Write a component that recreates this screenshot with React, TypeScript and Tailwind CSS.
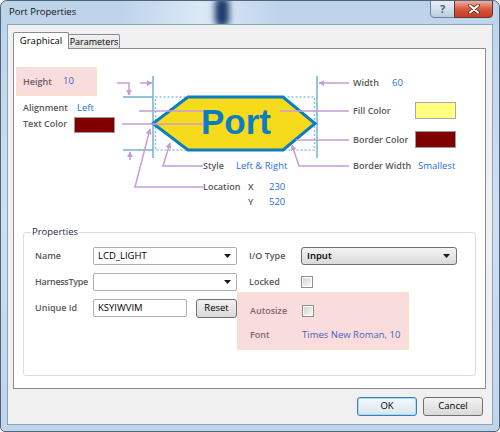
import React from 'react';

// ─── Small Win7-style controls ──────────────────────────────────────────────

function DropArrow() {
  return (
    <svg width="7" height="4" viewBox="0 0 7 4" className="shrink-0">
      <path d="M0 0h7L3.5 4z" fill="#1a1a1a" />
    </svg>
  );
}

function CheckBox() {
  return (
    <div className="w-[12px] h-[12px] border border-[#8f8f8f] bg-white p-[1px]">
      <div className="w-full h-full bg-gradient-to-br from-[#d6d6d6] to-[#f7f7f7]" />
    </div>
  );
}

const LABEL = 'text-[9px] font-semibold text-[#575757]';
const VALUE = 'text-[#1f6fd6]';

// ─── Diagram (free canvas: labels sit where the drawing needs them) ─────────

function PortDiagram() {
  return (
    <div className="relative h-[176px] shrink-0">
      <svg
        className="absolute inset-0"
        width="471"
        height="176"
        viewBox="14 49 471 176"
      >
        <defs>
          <marker
            id="ah"
            viewBox="0 0 8 8"
            refX="7"
            refY="4"
            markerWidth="6"
            markerHeight="6"
            orient="auto"
            markerUnits="userSpaceOnUse"
          >
            <path d="M0,0 L8,4 L0,8 z" fill="#c79bdb" />
          </marker>
        </defs>

        {/* guides */}
        <path
          d="M153 76 V158 M317 76 V158 M123 97 H153 M123 150 H153"
          stroke="#72b0d2"
          strokeWidth="1.5"
          fill="none"
        />
        <rect
          x="155.5"
          y="97"
          width="159"
          height="53"
          fill="none"
          stroke="#8cc3e2"
          strokeWidth="1.5"
          strokeDasharray="2 2"
        />

        {/* port shape */}
        <polygon
          points="188,97 283,97 315,123.5 283,150 188,150 153,123.5"
          fill="#f6da1c"
          stroke="#0b7dc1"
          strokeWidth="3"
        />

        {/* callout lines */}
        <g stroke="#c79bdb" strokeWidth="1.5" fill="none">
          <path d="M117 83 H129 V95" markerEnd="url(#ah)" />
          <path d="M140 83 H152" markerEnd="url(#ah)" />
          <path d="M130 160 V152" markerEnd="url(#ah)" />
          <path d="M139 111 H203" />
          <path d="M122 124 H203" />
          <path d="M203 187 H135 L150 129" markerEnd="url(#ah)" />
          <path d="M203 166 H163 L170 143" markerEnd="url(#ah)" />
          <path d="M280 111 H349" />
          <path d="M296 140 H349" />
          <path d="M349 166 H299 L292 145" markerEnd="url(#ah)" />
          <path d="M349 83 H319" markerEnd="url(#ah)" />
        </g>

        <text
          x="236"
          y="134"
          textAnchor="middle"
          fontFamily="'Liberation Sans', Arial, sans-serif"
          fontWeight="700"
          fontSize="35"
          fill="#0b7dc1"
        >
          Port
        </text>
      </svg>

      {/* left side */}
      <div className="absolute left-[2px] top-[18px] w-[81px] h-[29px] flex items-center pl-[6px] bg-[#f9dcdc] border border-[#fbe2c6]">
        <span className="w-[40px] text-[9px] font-semibold text-[#6e5b66]">Height</span>
        <span className="text-[#3d62c4]">10</span>
      </div>
      <span className={`absolute left-[9px] top-[52px] leading-[14px] ${LABEL}`}>Alignment</span>
      <span className={`absolute left-[63px] top-[52px] leading-[14px] ${VALUE}`}>Left</span>
      <span className={`absolute left-[9px] top-[68px] leading-[14px] ${LABEL}`}>Text Color</span>
      <div className="absolute left-[60px] top-[68px] w-[41px] h-[16px] bg-[#800000] border border-[#9a9a9a]" />

      {/* bottom middle */}
      <span className={`absolute left-[189px] top-[110px] leading-[14px] ${LABEL}`}>Style</span>
      <span className={`absolute left-[222px] top-[110px] leading-[14px] ${VALUE}`}>Left &amp; Right</span>
      <span className={`absolute left-[189px] top-[131px] leading-[14px] ${LABEL}`}>Location</span>
      <span className={`absolute left-[234px] top-[131px] leading-[14px] ${LABEL}`}>X</span>
      <span className={`absolute left-[255px] top-[131px] leading-[14px] ${VALUE}`}>230</span>
      <span className={`absolute left-[234px] top-[146px] leading-[14px] ${LABEL}`}>Y</span>
      <span className={`absolute left-[255px] top-[146px] leading-[14px] ${VALUE}`}>520</span>

      {/* right side */}
      <span className={`absolute left-[339px] top-[27px] leading-[14px] ${LABEL}`}>Width</span>
      <span className={`absolute left-[378px] top-[27px] leading-[14px] ${VALUE}`}>60</span>
      <span className={`absolute left-[339px] top-[55px] leading-[14px] ${LABEL}`}>Fill Color</span>
      <div className="absolute left-[401px] top-[53px] w-[41px] h-[17px] bg-[#ffff80] border border-[#a8a8a8]" />
      <span className={`absolute left-[339px] top-[84px] leading-[14px] ${LABEL}`}>Border Color</span>
      <div className="absolute left-[401px] top-[82px] w-[41px] h-[17px] bg-[#800000] border border-[#9a9a9a]" />
      <span className={`absolute left-[339px] top-[110px] leading-[14px] ${LABEL}`}>Border Width</span>
      <span className={`absolute left-[404px] top-[110px] leading-[14px] ${VALUE}`}>Smallest</span>
    </div>
  );
}

// ─── Properties group ───────────────────────────────────────────────────────

function PropertiesGroup() {
  return (
    <fieldset className="ml-[9px] w-[453px] h-[151px] border border-[#d5dfe5] rounded-[3px] pl-[11px] pt-[8px]">
      <legend className="-ml-[4px] px-[1px] leading-[14px] text-[#1d2c4c]">Properties</legend>
      <div className="flex">
        {/* left column */}
        <div className="w-[214px] flex flex-col gap-[8px]">
          <div className="flex items-center h-[18px]">
            <span className={`w-[58px] ${LABEL}`}>Name</span>
            <div className="w-[144px] h-[18px] flex items-center justify-between pl-[4px] pr-[5px] bg-white border border-[#abadb3] rounded-[2px]">
              <span>LCD_LIGHT</span>
              <DropArrow />
            </div>
          </div>
          <div className="flex items-center h-[18px]">
            <span className={`w-[58px] tracking-[-0.3px] ${LABEL}`}>HarnessType</span>
            <div className="w-[144px] h-[18px] flex items-center justify-end pr-[5px] bg-white border border-[#abadb3] rounded-[2px]">
              <DropArrow />
            </div>
          </div>
          <div className="flex items-center h-[18px]">
            <span className={`w-[58px] ${LABEL}`}>Unique Id</span>
            <div className="w-[94px] h-[18px] flex items-center pl-[4px] bg-white border border-[#abadb3] rounded-[2px]">
              KSYIWVIM
            </div>
            <button className="ml-[9px] w-[41px] h-[19px] flex items-center justify-center rounded-[3px] border border-[#707070] bg-gradient-to-b from-[#f2f2f2] to-[#d9d9d9]">
              Reset
            </button>
          </div>
        </div>

        {/* right column */}
        <div className="flex flex-col">
          <div className="flex items-center h-[18px]">
            <span className={`w-[52px] ${LABEL}`}>I/O Type</span>
            <div className="w-[156px] h-[18px] flex items-center justify-between pl-[5px] pr-[6px] rounded-[3px] border border-[#707070] bg-gradient-to-b from-[#f3f3f3] to-[#dadada]">
              <span className="font-semibold">Input</span>
              <DropArrow />
            </div>
          </div>
          <div className="flex items-center h-[18px] mt-[8px]">
            <span className={`w-[52px] ${LABEL}`}>Locked</span>
            <CheckBox />
          </div>
          <div className="-ml-[12px] mt-[1px] w-[172px] h-[58px] pl-[12px] pt-[10px] flex flex-col gap-[8px] bg-[#f9dcdc] border border-[#fbe2c6]">
            <div className="flex items-center h-[16px]">
              <span className="w-[52px] text-[9px] font-semibold text-[#84666b]">Autosize</span>
              <CheckBox />
            </div>
            <div className="flex items-center h-[16px]">
              <span className="w-[52px] text-[9px] font-semibold text-[#84666b]">Font</span>
              <span className="text-[#4a60c0]">Times New Roman, 10</span>
            </div>
          </div>
        </div>
      </div>
    </fieldset>
  );
}

// ─── Dialog ─────────────────────────────────────────────────────────────────

export default function App() {
  return (
    <div className="w-[500px] h-[432px] bg-white font-['Open_Sans','Noto_Sans',sans-serif] text-[9.5px] text-black">
      <div className="relative flex flex-col h-full overflow-hidden rounded-t-[7px] rounded-b-[5px] border border-[#50647a] bg-gradient-to-b from-[#bcd3ea] via-[#cde0f2] to-[#bfd5ec]">
        {/* glass reflections */}
        <div className="absolute left-[120px] top-0 w-[160px] h-[24px] bg-gradient-to-r from-transparent via-[#e3eef9] to-transparent opacity-80" />
        <div className="absolute left-[214px] top-[-4px] w-[14px] h-[30px] rounded-full bg-[#1d3a6c] blur-[3px]" />

        {/* title bar */}
        <div className="relative flex h-[23px] items-center pl-[8px]">
          <span className="text-[9.5px] text-[#101010]">Port Properties</span>
          <div className="ml-auto mr-[6px] self-start -mt-px flex">
            <div className="w-[25px] h-[18px] flex items-center justify-center rounded-bl-[4px] border border-[#6f8398] bg-gradient-to-b from-[#e6eef7] via-[#d2dfed] to-[#b9cbe0] text-[11px] font-bold text-[#4e5f72]">
              ?
            </div>
            <div className="w-[39px] h-[18px] -ml-px flex items-center justify-center rounded-br-[4px] border border-[#6b2f26] bg-gradient-to-b from-[#eab0a4] via-[#d6573f] to-[#c43d24]">
              <svg width="12" height="10" viewBox="0 0 12 10">
                <path d="M2 1.5L10 8.5M10 1.5L2 8.5" stroke="#5a1a10" strokeWidth="3.6" strokeLinecap="round" />
                <path d="M2 1.5L10 8.5M10 1.5L2 8.5" stroke="#ffffff" strokeWidth="2.2" strokeLinecap="round" />
              </svg>
            </div>
          </div>
        </div>

        {/* client area */}
        <div className="relative mx-[6px] mb-[6px] flex-1 flex flex-col border border-[#8ea3ba] bg-[#f0f0f0] pl-[5px] pr-[9px] pt-[7px]">
          {/* tabs */}
          <div className="flex items-end h-[17px] -mb-px">
            <div className="relative z-10 w-[56px] h-[17px] flex items-center justify-center bg-white border border-b-0 border-[#898c95] rounded-t-[2px]">
              Graphical
            </div>
            <div className="-ml-px mb-px w-[52px] h-[14px] flex items-center justify-center border border-b-0 border-[#898c95] rounded-t-[2px] bg-gradient-to-b from-[#f2f2f2] to-[#e1e1e1] text-[9px]">
              Parameters
            </div>
          </div>

          {/* tab page */}
          <div className="w-[473px] h-[341px] flex flex-col border border-[#898c95] bg-white">
            <PortDiagram />
            <PropertiesGroup />
          </div>

          {/* buttons */}
          <div className="mt-[8px] flex justify-end gap-[6px]">
            <button className="w-[60px] h-[19px] flex items-center justify-center rounded-[3px] border border-[#3c7fb1] bg-gradient-to-b from-[#f4f9fc] to-[#d9e6ef] shadow-[inset_0_0_0_1px_#a8dcf8]">
              OK
            </button>
            <button className="w-[60px] h-[19px] flex items-center justify-center rounded-[3px] border border-[#707070] bg-gradient-to-b from-[#f2f2f2] to-[#d9d9d9]">
              Cancel
            </button>
          </div>
        </div>
      </div>
    </div>
  );
}
